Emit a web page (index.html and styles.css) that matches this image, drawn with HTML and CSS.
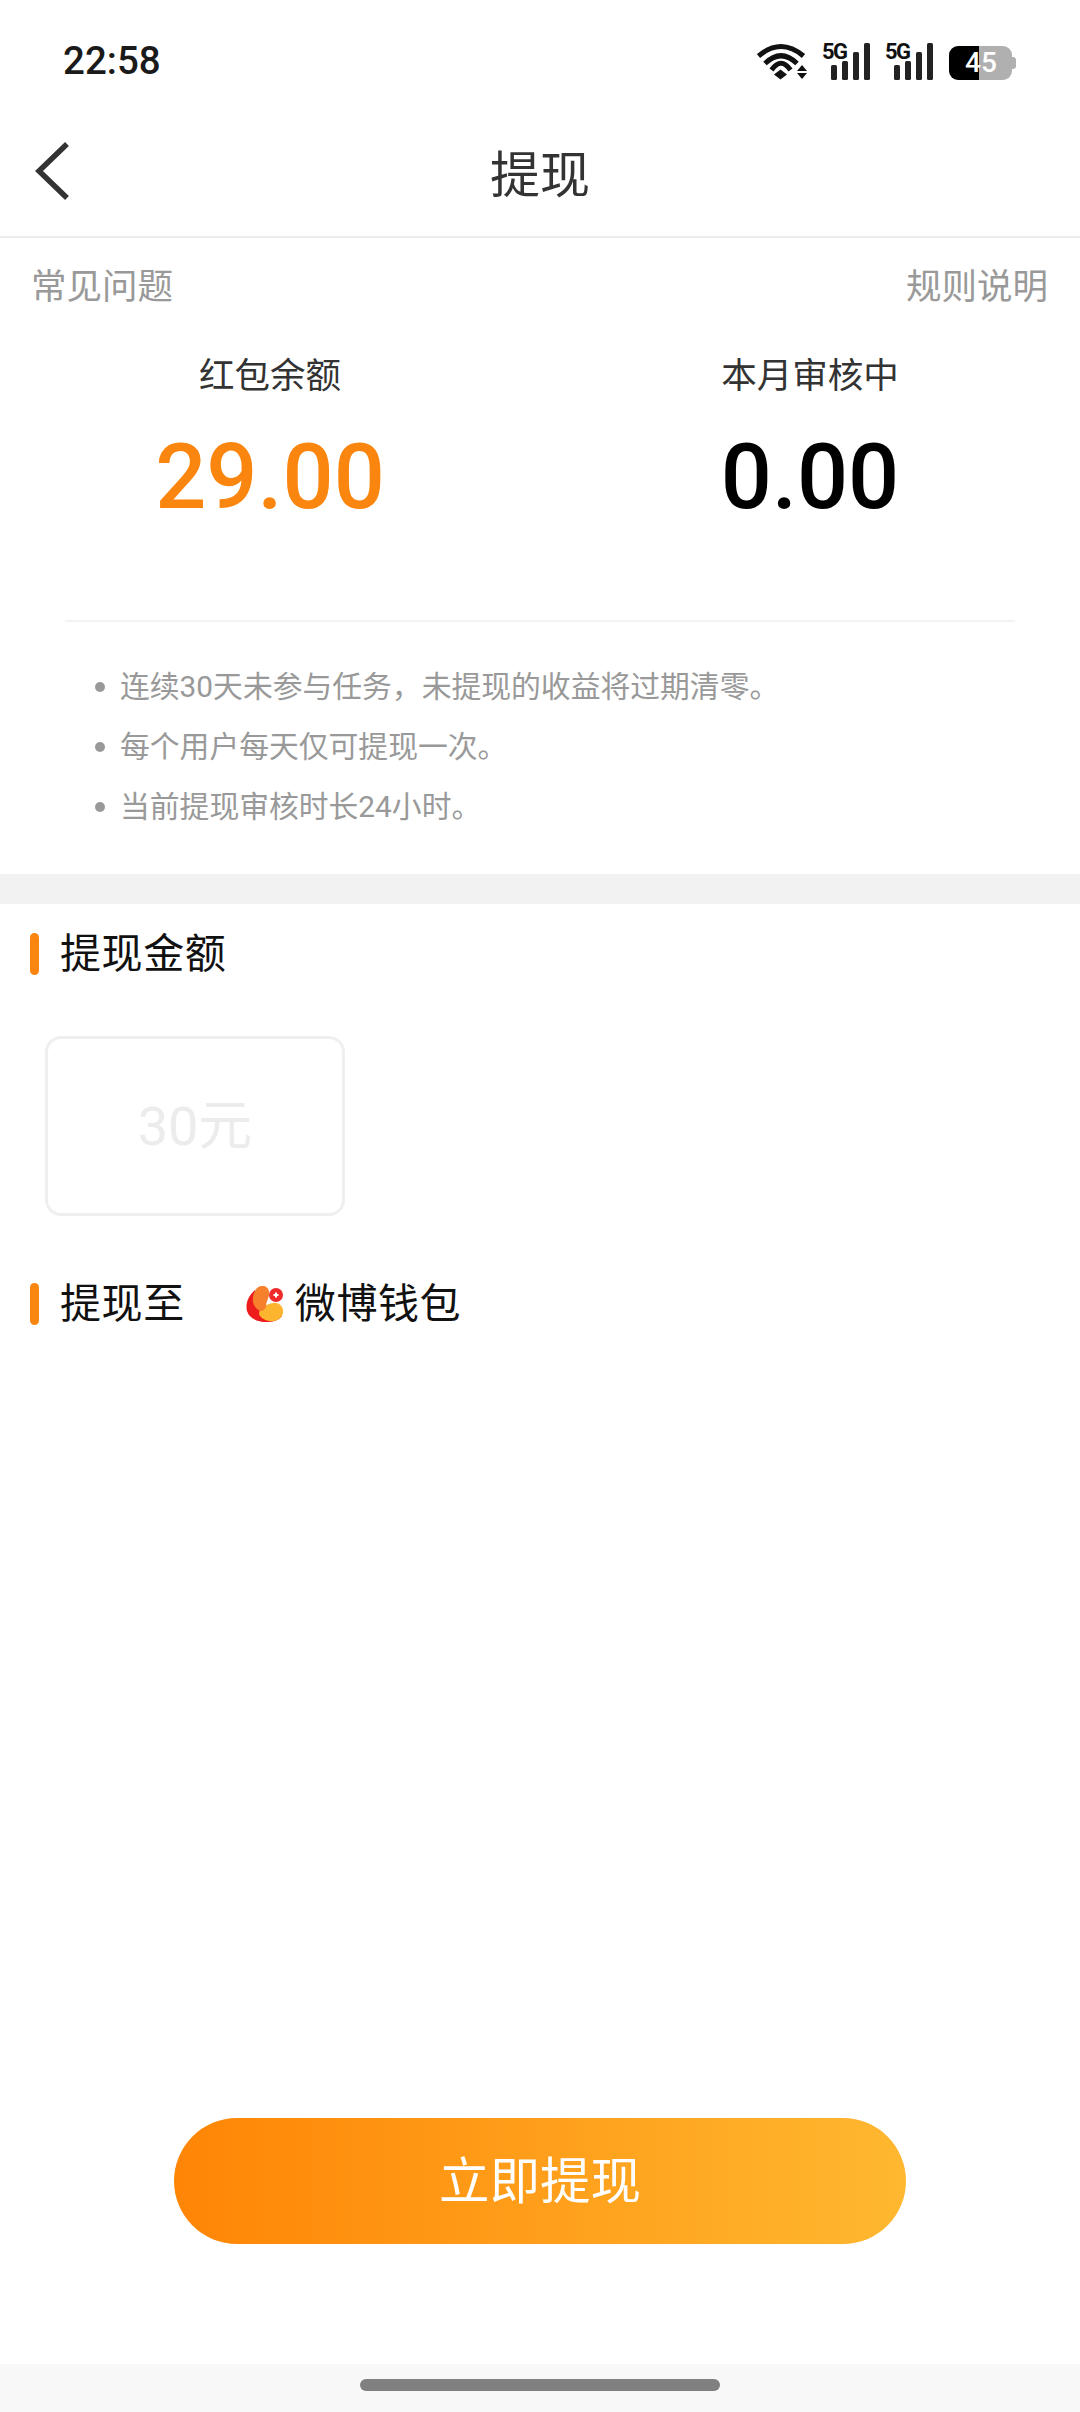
FILE: index.html
```html
<!DOCTYPE html>
<html lang="zh">
<head>
<meta charset="utf-8">
<title>提现</title>
<link rel="stylesheet" href="styles.css">
</head>
<body>
<div class="page">
  <header class="status">
    <span class="time">22:58</span>
    <div class="status-icons">
      <svg class="wifi" width="50" height="37" viewBox="0 0 50 37">
        <path d="M1.500 13Q24 -6 46.500 13" class="wave"/>
        <path d="M8 20.500Q24 5 40 20.500" class="wave"/>
        <path d="M14.500 27Q24 13.500 33.500 27" class="wave"/>
        <path d="M23.500 26.500L30 31.500L23.500 36.500L17 31.500Z" class="fill"/>
        <path d="M45 22L50 28H40Z M45 36L50 30H40Z" class="fill"/>
      </svg>
      <svg class="signal" width="48" height="45" viewBox="0 -8 48 45">
        <text x="0" y="16" class="five-g">5G</text>
        <rect x="9" y="22" width="6" height="15" rx="1.500"/>
        <rect x="20" y="18" width="6" height="19" rx="1.500"/>
        <rect x="31" y="9" width="6" height="28" rx="1.500"/>
        <rect x="42" y="0" width="6" height="37" rx="1.500"/>
      </svg>
      <svg class="signal" width="48" height="45" viewBox="0 -8 48 45">
        <text x="0" y="16" class="five-g">5G</text>
        <rect x="9" y="22" width="6" height="15" rx="1.500"/>
        <rect x="20" y="18" width="6" height="19" rx="1.500"/>
        <rect x="31" y="9" width="6" height="28" rx="1.500"/>
        <rect x="42" y="0" width="6" height="37" rx="1.500"/>
      </svg>
      <div class="battery"><div class="battery-body"><span>45</span></div><i class="battery-nub"></i></div>
    </div>
  </header>

  <nav class="nav">
    <svg class="back" width="36" height="60" viewBox="0 0 36 60"><path d="M33 3L5 30L33 57"/></svg>
    <h1 class="nav-title">提现</h1>
  </nav>

  <section class="summary">
    <div class="links"><span>常见问题</span><span>规则说明</span></div>
    <div class="stats">
      <div class="stat"><div class="stat-label">红包余额</div><div class="stat-value accent">29.00</div></div>
      <div class="stat"><div class="stat-label">本月审核中</div><div class="stat-value">0.00</div></div>
    </div>
    <div class="divider"></div>
    <ul class="notes">
      <li>连续30天未参与任务，未提现的收益将过期清零。</li>
      <li>每个用户每天仅可提现一次。</li>
      <li>当前提现审核时长24小时。</li>
    </ul>
  </section>

  <div class="band"></div>

  <main class="content">
    <div class="section-title first"><i class="mark"></i><span>提现金额</span></div>
    <div class="amount-card"><span>30元</span></div>
    <div class="section-title second">
      <i class="mark"></i><span>提现至</span>
      <div class="wallet">
        <svg class="wallet-logo" width="38" height="36" viewBox="0 0 38 36">
          <path d="M9 4C3 9 -1 17 1 25C3 32 11 36 20 36C28 36 33 34 36 30C28 30 18 27 14 20C11 14 9 9 9 4Z" fill="#ee1c1c"/>
          <path d="M27 17C33 16 38 21 37 27C36 33 29 36 23 35C18 34 13 31 13 27C14 21 21 18 27 17Z" fill="#fdb52f"/>
          <path d="M15 0C21 -1 24 4 23 9C22 14 20 16 20 21C17 28 11 25 8 19C5 13 8 1 15 0Z" fill="#f6802b"/>
          <circle cx="30" cy="9" r="7" fill="#ee2a2a"/>
          <path d="M30 6.500V11.500M27.500 9H32.500" class="logo-plus"/>
        </svg>
        <span>微博钱包</span>
      </div>
    </div>
    <div class="grow"></div>
    <button class="submit" type="button">立即提现</button>
  </main>

  <footer class="home-bar"><i class="home-pill"></i></footer>
</div>
</body>
</html>
```
FILE: styles.css
```css
* { box-sizing: border-box; }
html, body { margin: 0; padding: 0; background: #fff; }
body { font-family: Roboto, "Noto Sans CJK SC", sans-serif; }
.page { width: 1080px; height: 2412px; display: flex; flex-direction: column; background: #fff; }

.status { height: 100px; flex: none; display: flex; justify-content: space-between; align-items: flex-start; padding: 40px 64px 0 63px; }
.time { font-size: 38.5px; line-height: 42px; font-weight: 500; color: #1a1a1a; }
.status-icons { display: flex; align-items: flex-start; gap: 15px; margin-top: 3px; }
.wave { fill: none; stroke: #111; stroke-width: 5; }
.fill { fill: #111; }
.signal { margin-top: -8px; }
.signal rect { fill: #222; }
.five-g { font-family: Roboto, sans-serif; font-size: 22px; font-weight: 700; fill: #111; letter-spacing: -1.5px; }
.battery { display: flex; align-items: center; margin-top: 3px; margin-left: 1px; }
.battery-body { width: 63px; height: 34px; border-radius: 9px; background: linear-gradient(90deg, #000 0 30px, #b0b0b0 30px 100%); display: flex; align-items: center; justify-content: center; padding-left: 1px; }
.battery-body span { color: #fff; font-size: 28px; font-weight: 500; line-height: 34px; }
.battery-nub { width: 4px; height: 12px; background: #b0b0b0; border-radius: 0 3px 3px 0; }

.nav { height: 138px; flex: none; display: grid; grid-template-columns: 1fr auto 1fr; align-items: center; padding-left: 34px; border-bottom: 2px solid #ececec; }
.back { grid-column: 1; margin-top: 6px; fill: none; stroke: #333; stroke-width: 5.5; }
.nav-title { grid-column: 2; margin: 16px 0 0; padding-right: 34px; font-size: 50px; line-height: 70px; font-weight: 400; color: #333; }

.summary { flex: none; height: 636px; display: flex; flex-direction: column; }
.links { display: flex; justify-content: space-between; padding: 25px 32px 0 31px; font-size: 35.5px; line-height: 48px; color: #999; }
.stats { display: grid; grid-template-columns: 1fr 1fr; margin-top: 40px; }
.stat { display: flex; flex-direction: column; align-items: center; }
.stat-label { font-size: 35.5px; line-height: 50px; color: #333; }
.stat-value { font-size: 90px; line-height: 104px; margin-top: 25px; font-weight: 500; color: #000; }
.stat-value.accent { color: #fb860f; }
.divider { height: 2px; margin: 90px 65px 0; background: #f3f3f3; }
.notes { list-style: none; margin: 35px 0 0; padding: 0 0 0 120px; font-size: 29.8px; line-height: 60px; color: #999; }
.notes li { position: relative; }
.notes li::before { content: ""; position: absolute; left: -25px; top: 25px; width: 10px; height: 10px; border-radius: 50%; background: #999; }

.band { height: 30px; flex: none; background: #f2f2f2; }

.content { flex: 1; display: flex; flex-direction: column; align-items: flex-start; }
.section-title { display: flex; align-items: center; font-size: 41px; line-height: 50px; color: #111; padding-left: 30px; }
.section-title.first { margin-top: 25px; }
.section-title.second { margin-top: 63px; }
.section-title span { letter-spacing: .6px; }
.mark { width: 9px; height: 42px; border-radius: 5px; background: #fb860f; margin-right: 21px; }
.amount-card { width: 300px; height: 180px; margin: 57px 0 0 45px; border: 3px solid #efefef; border-radius: 16px; display: flex; align-items: center; justify-content: center; padding-bottom: 10px; font-size: 54px; color: #ececec; }
.wallet { display: flex; align-items: center; margin-left: 61px; }
.wallet-logo { margin-right: 11px; }
.logo-plus { stroke: #fff; stroke-width: 2; fill: none; }
.grow { flex: 1; }
.submit { width: 732px; height: 126px; margin: 0 0 120px 174px; padding: 0 0 9px; border: 0; border-radius: 63px; background: linear-gradient(90deg, #ff8505, #ffb830); color: #fff; font: 400 50.5px Roboto, "Noto Sans CJK SC", sans-serif; }

.home-bar { height: 48px; flex: none; background: #f8f8f8; display: flex; justify-content: center; padding-top: 15px; }
.home-pill { width: 360px; height: 12px; border-radius: 6px; background: #808080; }
```
